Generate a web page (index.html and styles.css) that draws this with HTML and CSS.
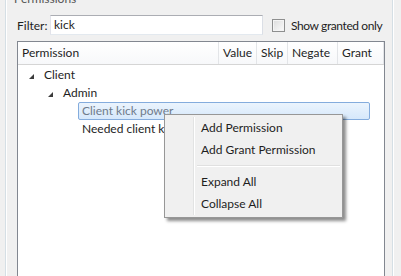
FILE: index.html
```html
<!DOCTYPE html>
<html lang="en">
<head>
  <meta charset="UTF-8">
  <title>Permissions</title>
  <link rel="stylesheet" href="styles.css">
</head>
<body>
  <div class="group">
    <div class="legend">Permissions</div>

    <div class="filter-row">
      <span class="filter-label">Filter:</span>
      <div class="filter-input">kick</div>
      <span class="checkbox"></span>
      <span class="check-label">Show granted only</span>
    </div>

    <div class="tree">
      <div class="tree-header">
        <div class="col col-name">Permission</div>
        <div class="col col-value">Value</div>
        <div class="col col-skip">Skip</div>
        <div class="col col-negate">Negate</div>
        <div class="col col-grant">Grant</div>
      </div>
      <div class="tree-body">
        <div class="row level-1"><span class="arrow"></span>Client</div>
        <div class="row level-2"><span class="arrow"></span>Admin</div>
        <div class="row level-3"><span class="item selected">Client kick power</span></div>
        <div class="row level-3"><span class="item">Needed client kick power</span></div>
      </div>
    </div>
  </div>

  <!-- context menu -->
  <div class="menu">
    <div class="menu-item">Add Permission</div>
    <div class="menu-item">Add Grant Permission</div>
    <div class="menu-sep"></div>
    <div class="menu-item">Expand All</div>
    <div class="menu-item">Collapse All</div>
  </div>
</body>
</html>
```

FILE: styles.css
```css
body {
  margin: 0;
  background-color: #f0f0f0;
  font-family: Lato, 'Noto Sans', sans-serif;
  font-size: 12px;
  color: #1e1e1e;
  width: 401px;
  height: 276px;
  overflow: hidden;
  position: relative;
}
.group {
  margin: -4px 0 0 5px;
  width: 388px;
  height: 296px;
  border: 1px solid #d5dfe5;
  border-radius: 3px;
  box-shadow: inset 1px 1px 0 #fff, 1px 1px 0 #fff;
  position: relative;
  box-sizing: border-box;
}
.legend {
  position: absolute;
  left: 6px;
  top: -6px;
  line-height: 16px;
  padding: 0 2px;
  background-color: #f0f0f0;
  color: #555;
}
.filter-row {
  display: flex;
  align-items: center;
  padding: 18px 0 0 11px;
  height: 20px;
  white-space: nowrap;
}
.filter-label {
  width: 33px;
}
.filter-input {
  width: 208px;
  height: 18px;
  line-height: 18px;
  border: 1px solid #abadb3;
  border-left-color: #e2e3ea;
  border-right-color: #dbdfe6;
  border-bottom-color: #e3e9ef;
  background-color: #fff;
  padding-left: 3px;
}
.checkbox {
  width: 11px;
  height: 11px;
  margin-left: 9px;
  border: 1px solid #8e8f8f;
  background: linear-gradient(135deg, #dcdcdc, #fbfbfb);
  box-shadow: inset 0 0 0 1px #f4f4f4;
}
.check-label {
  margin-left: 6px;
  letter-spacing: -0.4px;
}
.tree {
  margin: 6px 0 0 11px;
  width: 368px;
  height: 260px;
  border: 1px solid #828790;
  background-color: #fff;
  box-sizing: border-box;
}
.tree-header {
  display: flex;
  height: 22px;
  border-bottom: 1px solid #d5d5d5;
  background: linear-gradient(#fff, #f7f8fa);
}
.col {
  line-height: 22px;
  padding-left: 4px;
  border-right: 1px solid #e3e5e8;
  box-sizing: border-box;
}
.col-name { width: 201px; }
.col-value { width: 38px; }
.col-skip { width: 31px; }
.col-negate { width: 50px; }
.col-grant { width: 46px; }
.tree-body {
  padding-top: 1px;
}
.row {
  height: 18px;
  line-height: 18px;
  display: flex;
  align-items: center;
  white-space: nowrap;
}
.level-1 { padding-left: 11px; }
.level-2 { padding-left: 30px; }
.level-3 { padding-left: 60px; }
.arrow {
  width: 0;
  height: 0;
  border-left: 5px solid transparent;
  border-bottom: 5px solid #3c3c3c;
  margin: 2px 10px 0 0;
}
.item {
  padding: 0 3px;
  height: 16px;
  line-height: 16px;
  border: 1px solid transparent;
  border-radius: 2px;
}
.item.selected {
  width: 284px;
  color: #6f7b8b;
  border-color: #84acdd;
  background: linear-gradient(#ebf4fd, #d6e8fb);
}
.menu {
  position: absolute;
  left: 164px;
  top: 114px;
  width: 179px;
  padding: 2px;
  box-sizing: border-box;
  border: 1px solid #979797;
  background-color: #f0f0f0;
  box-shadow: 3px 3px 3px rgba(0, 0, 0, 0.45);
}
.menu::before {
  content: "";
  position: absolute;
  left: 28px;
  top: 2px;
  bottom: 2px;
  border-left: 1px solid #e2e3e3;
  border-right: 1px solid #fff;
}
.menu-item {
  height: 22px;
  line-height: 22px;
  padding-left: 34px;
}
.menu-sep {
  margin: 4px 0 4px 30px;
  border-top: 1px solid #e0e0e0;
  border-bottom: 1px solid #fff;
}
```
